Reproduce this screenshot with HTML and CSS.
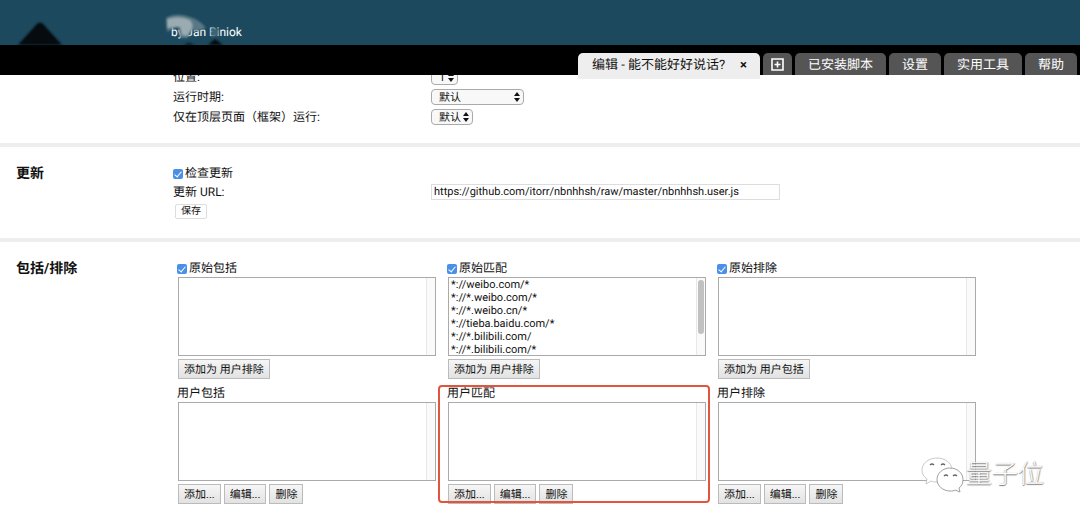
FILE: index.html
```html
<!DOCTYPE html>
<html lang="zh-CN">
<head>
<meta charset="utf-8">
<title>编辑 - 能不能好好说话?</title>
<link rel="stylesheet" href="styles.css">
</head>
<body>
<header class="top">
  <div class="banner">
    <svg class="banner-mark" width="70" height="30" viewBox="0 0 70 30" aria-hidden="true"><path class="peak" d="M17 31 37 9Q40 6 43 9L63 31Z"/></svg>
    <span class="author">by Jan Biniok</span>
    <svg class="smudge" width="80" height="35" viewBox="0 0 80 35" aria-hidden="true">
      <path class="haze" d="M6 8Q16 2 30 7Q40 10 46 18L38 21L32 20L28 28H20L18 16L7 22Z"/>
      <path class="haze-light" d="M7 9Q20 5 30 10Q34 14 32 19L27 26L22 25L20 17L7 18Z"/>
      <path class="teal" d="M51 17l8 2-1 7-7 1z"/>
      <path class="peak" d="M48 35l7-6 8 6zM23 35l6-2 6 2z"/>
    </svg>
  </div>
  <nav class="tabs">
    <div class="tab tab-active"><span>编辑 - 能不能好好说话?</span><button class="close" type="button" aria-label="关闭">×</button></div>
    <button class="tab tab-add" type="button" aria-label="新建">
      <svg width="13" height="13" viewBox="0 0 13 13"><path d="M1 1h11v11H1zM6.500 3.500v6M3.500 6.500h6" fill="none" stroke="#fff" stroke-width="1.600"/></svg>
    </button>
    <button class="tab tab-scripts" type="button">已安装脚本</button>
    <button class="tab" type="button">设置</button>
    <button class="tab" type="button">实用工具</button>
    <button class="tab" type="button">帮助</button>
  </nav>
</header>

<main class="page">
  <section class="section general">
    <h2 class="title"></h2>
    <div class="body">
      <div class="row"><label for="pos">位置:</label><div class="pick"><select id="pos"><option>1</option></select><svg class="arrows" viewBox="0 0 6 10"><path d="M0 4 3 0 6 4zM0 6h6L3 10z"/></svg></div></div>
      <div class="row"><label for="when">运行时期:</label><div class="pick pick-wide"><select id="when"><option>默认</option></select><svg class="arrows" viewBox="0 0 6 10"><path d="M0 4 3 0 6 4zM0 6h6L3 10z"/></svg></div></div>
      <div class="row"><label for="frame">仅在顶层页面（框架）运行:</label><div class="pick pick-mid"><select id="frame"><option>默认</option></select><svg class="arrows" viewBox="0 0 6 10"><path d="M0 4 3 0 6 4zM0 6h6L3 10z"/></svg></div></div>
    </div>
  </section>

  <section class="section update">
    <h2 class="title">更新</h2>
    <div class="body">
      <label class="check"><input type="checkbox" checked>检查更新</label>
      <div class="row"><label for="url">更新 URL:</label><input class="url" id="url" type="text" value="https://github.com/itorr/nbnhhsh/raw/master/nbnhhsh.user.js"></div>
      <button class="save" type="button">保存</button>
    </div>
  </section>

  <section class="section rules">
    <h2 class="title">包括/排除</h2>
    <div class="body lists">
      <div class="group">
        <label class="check"><input type="checkbox" checked>原始包括</label>
        <div class="listbox"><select multiple aria-label="原始包括"></select></div>
        <div class="actions"><button type="button">添加为 用户排除</button></div>
      </div>
      <div class="group">
        <label class="check"><input type="checkbox" checked>原始匹配</label>
        <div class="listbox scrolled"><select multiple aria-label="原始匹配">
          <option>*://weibo.com/*</option>
          <option>*://*.weibo.com/*</option>
          <option>*://*.weibo.cn/*</option>
          <option>*://tieba.baidu.com/*</option>
          <option>*://*.bilibili.com/</option>
          <option>*://*.bilibili.com/*</option>
        </select></div>
        <div class="actions"><button type="button">添加为 用户排除</button></div>
      </div>
      <div class="group">
        <label class="check"><input type="checkbox" checked>原始排除</label>
        <div class="listbox"><select multiple aria-label="原始排除"></select></div>
        <div class="actions"><button type="button">添加为 用户包括</button></div>
      </div>
      <div class="group">
        <label class="check" for="ui">用户包括</label>
        <div class="listbox"><select multiple id="ui"></select></div>
        <div class="actions"><button type="button">添加...</button><button type="button">编辑...</button><button type="button">删除</button></div>
      </div>
      <div class="group marked">
        <label class="check" for="um">用户匹配</label>
        <div class="listbox"><select multiple id="um"></select></div>
        <div class="actions"><button type="button">添加...</button><button type="button">编辑...</button><button type="button">删除</button></div>
      </div>
      <div class="group">
        <label class="check" for="ue">用户排除</label>
        <div class="listbox"><select multiple id="ue"></select></div>
        <div class="actions"><button type="button">添加...</button><button type="button">编辑...</button><button type="button">删除</button></div>
      </div>
    </div>
  </section>
</main>

<div class="watermark">
  <svg width="44" height="36" viewBox="0 0 44 36" aria-hidden="true">
    <g fill="#fff" stroke="#bbb" stroke-width=".8">
      <path d="M16 1C8 1 1 6 1 13c0 4 2 7 5 9l-1 5 5-3c2 1 4 1 6 1 8 0 15-5 15-12S24 1 16 1z"/>
      <path d="M29 11c-7 0-13 5-13 11.500S22 34 29 34c2 0 4 0 5-1l5 2-1-4c3-2 4-5 4-8.500C42 16 36 11 29 11z" stroke="#888"/>
      <path d="M9 8q2-2 4 0M20 8q2-2 4 0M23 19q2-2 4 0M32 19q2-2 4 0" fill="none" stroke="#666" stroke-width="1.200"/>
    </g>
  </svg>
  <span>量子位</span>
</div>
</body>
</html>
```

FILE: styles.css
```css
* { box-sizing: border-box; }

body {
  margin: 0;
  min-height: 100vh;
  position: relative;
  background: #fff;
  color: #111;
  font: 12px/20px Roboto, "Noto Sans CJK SC", sans-serif;
  text-rendering: geometricPrecision;
}

button, input, select {
  margin: 0;
  color: inherit;
  font: inherit;
  text-rendering: inherit;
}

/* Header */
.top { position: relative; z-index: 2; }

.banner {
  position: relative;
  height: 45px;
  padding: 22px 0 0 171px;
  background: #1c495d;
  color: #fff;
}
.banner-mark { position: absolute; left: 0; bottom: 0; filter: blur(1px); }
.smudge { position: absolute; left: 160px; top: 10px; filter: blur(1px); }
.peak { fill: #050b0e; }
.haze { fill: #587885; }
.haze-light { fill: #9aabb1; }
.teal { fill: #3c6475; }

.tabs {
  display: flex;
  justify-content: flex-end;
  gap: 3px;
  height: 30px;
  padding: 8px 3px 0 0;
  background: #000;
}
.tab {
  height: 22px;
  padding: 3px 13px 0;
  border: 0;
  border-radius: 5px 5px 0 0;
  background: #555;
  color: #fff;
  font-size: 13px;
  line-height: 20px;
  white-space: nowrap;
}
.tab-active {
  display: flex;
  justify-content: space-between;
  width: 182px;
  height: 26px;
  padding: 3px 12px 0 14px;
  background: #eee;
  color: #111;
}
.tab-add { display: flex; align-items: center; padding: 0 8px; }
.close {
  height: 20px;
  padding: 0 1px;
  border: 0;
  background: none;
  font-size: 13px;
  font-weight: 700;
  line-height: 20px;
}

/* Sections */
.page { margin-top: -8px; }
.section { display: flex; border-bottom: 4px solid #eee; }
.title {
  flex: none;
  width: 173px;
  margin: 0;
  padding-left: 16px;
  font-size: 14px;
  line-height: 20px;
}
.body { flex: 1; min-width: 0; }
.general { padding-bottom: 16px; }
.update { padding: 17px 0 19px; }
.rules { padding: 17px 0; border-bottom: 0; }

.row {
  display: grid;
  grid-template-columns: 258px 1fr;
  align-items: center;
  height: 20px;
}
.check { display: flex; align-items: center; height: 18px; }
.check input {
  appearance: none;
  display: grid;
  place-items: center;
  width: 10px;
  height: 10px;
  margin: 2px 2px 0 0;
  border-radius: 2px;
  background: #4a90e8;
}
.check input:checked::before {
  content: "";
  width: 3px;
  height: 6px;
  margin-bottom: 1px;
  border: solid #fff;
  border-width: 0 1px 1px 0;
  transform: rotate(40deg);
}

.pick { position: relative; width: 27px; height: 16px; }
.pick-wide { width: 93px; }
.pick-mid { width: 42px; }
.pick select {
  appearance: none;
  display: block;
  width: 100%;
  height: 16px;
  padding: 1px 7px 0;
  border: 1px solid #aaa;
  border-radius: 4px;
  background: #f8f8f8;
  font-size: 11px;
  line-height: 14px;
}
.arrows { position: absolute; right: 4px; top: 3px; width: 6px; height: 10px; fill: #111; }

.url {
  width: calc(100% - 300px);
  height: 16px;
  padding: 0 2px;
  border: 1px solid #ddd;
  background: #fff;
  font-size: 11px;
}
.save {
  display: block;
  height: 15px;
  margin: 2px 0 0 2px;
  padding: 0 5px;
  border: 1px solid #ddd;
  border-radius: 2px;
  background: #fff;
  font-size: 10px;
  line-height: 13px;
}

/* Include / exclude lists */
.lists {
  display: grid;
  grid-template-columns: repeat(3, 25vw);
  row-gap: 5px;
  padding-left: 4px;
}
.group { position: relative; }
.listbox { position: relative; margin: 0 11px 3px 1px; }
.listbox select {
  display: block;
  width: 100%;
  height: 79px;
  padding: 0;
  overflow: hidden;
  border: 1px solid #aaa;
  border-radius: 0;
  background: linear-gradient(to left, #fafafa 8px, #e8e8e8 8px, #e8e8e8 9px, #fff 9px);
  font-size: 11px;
}
.listbox option { min-height: 13px; padding: 0 2px; line-height: 13px; }
.scrolled::after {
  content: "";
  position: absolute;
  top: 3px;
  right: 2px;
  width: 6px;
  height: 54px;
  border-radius: 3px;
  background: #c1c1c1;
}
.actions { display: flex; gap: 3px; padding-left: 1px; }
.actions button {
  height: 20px;
  padding: 1px 5px 0;
  border: 1px solid #bbb;
  background: linear-gradient(#f6f6f6, #e2e2e2);
  font-size: 11px;
  line-height: 17px;
  white-space: nowrap;
}
.marked::after {
  content: "";
  position: absolute;
  inset: 1px 7px 1px -9px;
  border: 2px solid #e2553d;
  border-radius: 4px;
  pointer-events: none;
}

/* Watermark */
.watermark {
  position: absolute;
  right: 36px;
  bottom: 28px;
  display: flex;
  align-items: center;
  gap: 1px;
  color: #fff;
  font-size: 26px;
  font-weight: 300;
  line-height: 38px;
  text-shadow: 0 1px 1px #777, 1px 0 1px #aaa;
}
```
